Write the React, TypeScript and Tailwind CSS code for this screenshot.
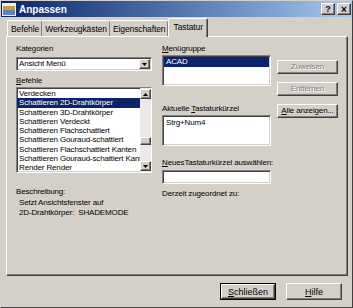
const font = { fontFamily: '"Liberation Sans", Arial, sans-serif' };

const sunken =
  "border border-t-[#808080] border-l-[#808080] border-b-white border-r-white shadow-[inset_1px_1px_0_#404040,inset_-1px_-1px_0_#d4d0c8]";
const raised =
  "border border-t-white border-l-white border-b-[#404040] border-r-[#404040] shadow-[inset_-1px_-1px_0_#808080,inset_1px_1px_0_#d4d0c8]";

function Btn({ label, u, disabled }: { label: string; u?: number; disabled?: boolean }) {
  const text =
    u === undefined ? (
      label
    ) : (
      <>
        {label.slice(0, u)}
        <span className="underline">{label[u]}</span>
        {label.slice(u + 1)}
      </>
    );
  return (
    <div
      className={`flex h-[14px] w-[61px] items-center justify-center whitespace-nowrap bg-[#d4d0c8] ${raised} ${
        disabled ? "text-[#808080] [text-shadow:1px_1px_0_#fff]" : "text-black"
      }`}
    >
      {text}
    </div>
  );
}

function Arrow({ up }: { up?: boolean }) {
  return (
    <div className={`flex h-[10px] w-[11px] shrink-0 items-center justify-center bg-[#d4d0c8] ${raised}`}>
      <svg width="5" height="3" viewBox="0 0 5 3">
        <path d={up ? "M2.5 0L5 3H0z" : "M0 0h5L2.5 3z"} fill="#000" />
      </svg>
    </div>
  );
}

const items = [
  "Verdecken",
  "Schattieren 2D-Drahtkörper",
  "Schattieren 3D-Drahtkörper",
  "Schattieren Verdeckt",
  "Schattieren Flachschattiert",
  "Schattieren Gouraud-schattiert",
  "Schattieren Flachschattiert Kanten",
  "Schattieren Gouraud-schattiert Kanten",
  "Render Render",
];

export default function App() {
  return (
    <div
      className="flex h-[308px] w-[353px] flex-col overflow-hidden border border-t-[#d4d0c8] border-l-[#d4d0c8] border-b-[#404040] border-r-[#404040] bg-[#d4d0c8] text-black"
      style={font}
    >
      {/* title bar */}
      <div className="flex h-[16px] shrink-0 items-center bg-gradient-to-r from-[#0a246a] to-[#a6caf0] px-[1px]">
        <div className="mr-[3px] flex h-[13px] w-[14px] flex-col justify-end bg-[#f4f0e0] p-[1px]">
          <div className="h-[4px] w-full bg-[#c8a040]" />
          <div className="h-[5px] w-full bg-[#6080c0]" />
        </div>
        <span className="text-[10px] font-bold leading-[13px] text-white">Anpassen</span>
        <div className="ml-auto flex gap-[2px]">
          <div className={`flex h-[12px] w-[14px] items-center justify-center bg-[#d4d0c8] text-[9px] font-bold leading-[9px] ${raised}`}>
            ?
          </div>
          <div className={`flex h-[12px] w-[14px] items-center justify-center bg-[#d4d0c8] text-[10px] font-bold leading-[9px] ${raised}`}>
            ×
          </div>
        </div>
      </div>

      {/* tabs */}
      <div className="flex h-[19px] shrink-0 items-end pl-[6px] text-[8.5px] leading-[10px] tracking-[-0.1px]">
        <div className="flex h-[16px] items-center rounded-t-[2px] border-l border-t border-white px-[3px] shadow-[inset_-1px_0_0_#808080]">
          Befehle
        </div>
        <div className="flex h-[16px] items-center rounded-t-[2px] border-t border-white px-[3px] shadow-[inset_-1px_0_0_#808080]">
          Werkzeugkästen
        </div>
        <div className="flex h-[16px] items-center rounded-t-[2px] border-t border-white px-[3px] shadow-[inset_-1px_0_0_#808080]">
          Eigenschaften
        </div>
        <div className="relative z-10 -mb-[1px] flex h-[19px] items-center rounded-t-[2px] border-l border-t border-r border-l-white border-t-white border-r-[#404040] bg-[#d4d0c8] px-[4px] pb-[2px] shadow-[inset_-1px_0_0_#808080]">
          Tastatur
        </div>
      </div>

      {/* panel */}
      <div className="ml-[5px] mr-[4px] flex h-[240px] shrink-0 border border-t-white border-l-white border-b-[#404040] border-r-[#404040] pl-[9px] pt-[7px] text-[8px] leading-[10px] tracking-[-0.15px] shadow-[inset_-1px_-1px_0_#808080]">
        {/* left column */}
        <div className="flex w-[136px] flex-col">
          <div>Kategorien</div>
          <div className={`mt-[3px] flex h-[14px] items-center bg-white pl-[2px] pr-[1px] ${sunken}`}>
            <span className="flex-1">Ansicht Menü</span>
            <Arrow />
          </div>
          <div className="mt-[5px]">
            <span className="underline">B</span>efehle
          </div>
          <div className={`mt-[1px] flex h-[86px] bg-white ${sunken}`}>
            <div className="flex min-w-0 flex-1 flex-col overflow-hidden pt-[1px] leading-[9.3px]">
              {items.map((t, i) => (
                <div
                  key={t}
                  className={`whitespace-nowrap pl-[2px] ${i === 1 ? "bg-[#0a246a] text-white" : ""}`}
                >
                  {t}
                </div>
              ))}
            </div>
            <div className="flex w-[11px] flex-col bg-[#ebe9e5] py-[1px]">
              <Arrow up />
              <div className="h-[38px]" />
              <div className={`h-[8px] w-[11px] bg-[#d4d0c8] ${raised}`} />
              <div className="flex-1" />
              <Arrow />
            </div>
          </div>
          <div className="mt-[14px]">Beschreibung:</div>
          <div className="mt-[1px] pl-[3px]">Setzt Ansichtsfenster auf</div>
          <div className="whitespace-pre pl-[3px]">2D-Drahtkörper:  SHADEMODE</div>
        </div>

        {/* middle column */}
        <div className="ml-[10px] flex w-[109px] flex-col">
          <div>
            <span className="underline">M</span>enügruppe
          </div>
          <div className={`mt-[1px] h-[31px] bg-white p-[1px] ${sunken}`}>
            <div className="bg-[#0a246a] pl-[2px] text-white">ACAD</div>
          </div>
          <div className="mt-[18px]">
            Aktuelle <span className="underline">T</span>astaturkürzel
          </div>
          <div className={`mt-[1px] h-[31px] bg-white px-[3px] py-[2px] ${sunken}`}>Strg+Num4</div>
          <div className="mt-[12px] whitespace-nowrap">
            <span className="underline">N</span>euesTastaturkürzel auswählen:
          </div>
          <div className={`mt-[2px] h-[14px] bg-white ${sunken}`} />
          <div className="mt-[5px] whitespace-nowrap">Derzeit zugeordnet zu:</div>
        </div>

        {/* buttons column */}
        <div className="ml-[6px] flex flex-col gap-[8px] pt-[16px]">
          <Btn label="Zuweisen" disabled />
          <Btn label="Entfernen" disabled />
          <Btn label="Alle anzeigen..." u={0} />
        </div>
      </div>

      {/* bottom buttons */}
      <div className="mt-[7px] flex justify-end gap-[10px] pr-[10px] text-[9px] leading-[10px]">
        <div className="border border-black">
          <div className={`flex h-[15px] w-[54px] items-center justify-center bg-[#d4d0c8] ${raised}`}>
            <span className="underline">S</span>chließen
          </div>
        </div>
        <div className={`flex h-[17px] w-[56px] items-center justify-center bg-[#d4d0c8] ${raised}`}>
          <span className="underline">H</span>ilfe
        </div>
      </div>
    </div>
  );
}
